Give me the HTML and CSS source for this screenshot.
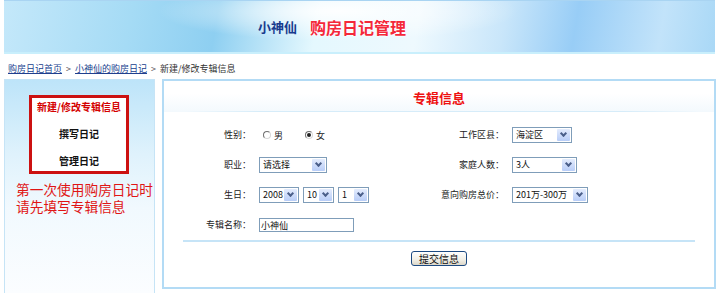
FILE: index.html
```html
<!DOCTYPE html>
<html>
<head>
    <title>购房日记管理 - 新建/修改专辑信息</title>
    <link rel="stylesheet" href="styles.css">
</head>
<body>
    <div class="header">
        <span class="owner">小神仙</span>
        <span class="site-title">购房日记管理</span>
    </div>

    <div class="crumbs">
        <a href="#">购房日记首页</a><span class="sep">&gt;</span><a href="#">小神仙的购房日记</a><span class="sep">&gt;</span><span>新建/修改专辑信息</span>
    </div>

    <div class="content">
        <div class="sidebar">
            <ul class="menu">
                <li class="current">新建/修改专辑信息</li>
                <li>撰写日记</li>
                <li>管理日记</li>
            </ul>
            <p class="tip">第一次使用购房日记时<br>请先填写专辑信息</p>
        </div>

        <div class="panel">
            <div class="panel-title">专辑信息</div>
            <form class="album-form">
                <label class="lbl">性别：</label>
                <div class="field">
                    <span class="radio"></span><span class="radio-text">男</span>
                    <span class="radio checked"></span><span class="radio-text">女</span>
                </div>
                <label class="lbl">工作区县：</label>
                <div class="field">
                    <span class="select w60">海淀区<i class="arrow"></i></span>
                </div>

                <label class="lbl">职业：</label>
                <div class="field">
                    <span class="select w68">请选择<i class="arrow"></i></span>
                </div>
                <label class="lbl">家庭人数：</label>
                <div class="field">
                    <span class="select w65">3人<i class="arrow"></i></span>
                </div>

                <label class="lbl">生日：</label>
                <div class="field">
                    <span class="select w40">2008<i class="arrow"></i></span>
                    <span class="select w31">10<i class="arrow"></i></span>
                    <span class="select w31">1<i class="arrow"></i></span>
                </div>
                <label class="lbl">意向购房总价：</label>
                <div class="field">
                    <span class="select w76">201万-300万<i class="arrow"></i></span>
                </div>

                <label class="lbl">专辑名称：</label>
                <div class="field">
                    <input type="text" class="text-input" value="小神仙">
                </div>
            </form>
            <div class="divider"></div>
            <div class="actions">
                <button type="button" class="submit-btn">提交信息</button>
            </div>
        </div>
    </div>
</body>
</html>
```

FILE: styles.css
```css
body {
    margin: 0;
    padding: 0;
    background: #fff;
    font-family: "Noto Sans CJK SC", "Liberation Sans", sans-serif;
    font-size: 9px;
    color: #222;
    overflow: hidden;
}
.header {
    margin: 0 5px 0 4px;
    height: 54px;
    box-sizing: border-box;
    border-top: 1px solid #a9d4f2;
    border-bottom: 2px solid #c9effc;
    display: flex;
    align-items: center;
    padding-left: 254px;
    background:
        radial-gradient(ellipse 180px 30px at 47% 20%, rgba(255,255,255,0.95), rgba(255,255,255,0)),
        linear-gradient(100deg, #c4e8fa 0%, #a5dbf5 18%, #8ecff1 30%, #e4f8fe 44%, #eef9fe 58%, #c9e6fa 70%, #98cdf6 80%, #c2e3fa 92%, #a9d8f6 100%);
}
.owner {
    font-size: 13px;
    font-weight: bold;
    color: #183b8e;
    margin-right: 13px;
}
.site-title {
    font-size: 16px;
    font-weight: bold;
    color: #f4283a;
    text-shadow: 0 0 2px #fff, 0 0 2px #fff, 0 0 1px #fff;
}
.crumbs {
    padding: 8px 0 0 8px;
    height: 25px;
    box-sizing: border-box;
    line-height: 14px;
    color: #444;
}
.crumbs a {
    color: #203f8e;
    text-decoration: underline;
}
.crumbs span {
    color: #333;
}
.crumbs .sep {
    margin: 0 4px;
    color: #555;
}
.content {
    display: flex;
    padding-left: 4px;
}
.sidebar {
    width: 151px;
    height: 214px;
    box-sizing: border-box;
    border: 1px solid #c6e4f6;
    border-bottom: none;
    margin-right: 7px;
    padding-top: 15px;
    background: linear-gradient(#bde4f9, #dff2fc 35%, #f1f9fe 60%, #fbfdff);
}
.menu {
    list-style: none;
    margin: 0 0 0 24px;
    padding: 0 0 1px;
    width: 100px;
    box-sizing: border-box;
    border: 3px solid #cc1111;
    display: flex;
    flex-direction: column;
    gap: 9px;
    background: #fff;
}
.menu li {
    line-height: 18px;
    text-align: center;
    font-size: 10px;
    font-weight: bold;
    color: #111;
}
.menu li.current {
    color: #d40000;
}
.tip {
    margin: 7px 0 0 11px;
    font-size: 13.7px;
    line-height: 17px;
    white-space: nowrap;
    color: #e01515;
}
.panel {
    width: 554px;
    height: 210px;
    box-sizing: border-box;
    border: 2px solid #b3dbf5;
}
.panel-title {
    position: relative;
    height: 31px;
    line-height: 34px;
    text-align: center;
    font-size: 13px;
    font-weight: bold;
    color: #ee1111;
    background: linear-gradient(#fff 40%, #f3f9fd);
}
.panel-title::after {
    content: "";
    position: absolute;
    left: 20px;
    right: 14px;
    bottom: 0;
    height: 1px;
    background: linear-gradient(90deg, rgba(214,236,249,0), #d6ecf9 15%, #d6ecf9 85%, rgba(214,236,249,0));
}
.album-form {
    display: grid;
    grid-template-columns: 95px 170px 83px 1fr;
    grid-auto-rows: 30px;
    padding-top: 8px;
    margin: 0;
}
.lbl {
    text-align: right;
    padding-right: 8px;
    line-height: 30px;
    color: #222;
}
.field {
    display: flex;
    align-items: center;
    gap: 4px;
}
.radio {
    width: 8px;
    height: 8px;
    box-sizing: border-box;
    border-radius: 50%;
    border: 1px solid;
    border-color: #6f6f6f #d8d8d8 #d8d8d8 #6f6f6f;
    background: #fff;
    margin-left: 4px;
    position: relative;
}
.radio.checked {
    margin-left: 18px;
}
.radio.checked::after {
    content: "";
    position: absolute;
    left: 1px;
    top: 1px;
    width: 4px;
    height: 4px;
    border-radius: 50%;
    background: #222;
}
.radio-text {
    margin-left: -1px;
}
.select {
    display: inline-flex;
    align-items: center;
    justify-content: space-between;
    height: 16px;
    box-sizing: border-box;
    border: 1px solid #7f9db9;
    background: #fff;
    padding-left: 3px;
    color: #111;
    line-height: 14px;
}
.arrow {
    width: 13px;
    height: 12px;
    margin-right: 1px;
    background: linear-gradient(#e4ecfd, #b8cdf8);
    border-radius: 1px;
    position: relative;
}
.arrow::after {
    content: "";
    position: absolute;
    left: 4px;
    top: 2px;
    width: 3px;
    height: 3px;
    border-right: 2px solid #4b5f8a;
    border-bottom: 2px solid #4b5f8a;
    transform: rotate(45deg);
}
.w40 { width: 40px; }
.w31 { width: 31px; }
.w60 { width: 60px; }
.w65 { width: 65px; }
.w68 { width: 68px; }
.w76 { width: 76px; }
.text-input {
    width: 95px;
    height: 14px;
    box-sizing: border-box;
    border: 1px solid #7f9db9;
    padding: 0 1px;
    font-family: inherit;
    font-size: 9px;
    color: #111;
}
.divider {
    height: 2px;
    margin: 0 19px;
    background: #c6e4f7;
}
.actions {
    text-align: center;
    padding-top: 9px;
}
.submit-btn {
    width: 56px;
    height: 15px;
    padding: 0;
    border: 1px solid #1d4a82;
    border-radius: 3px;
    background: linear-gradient(#ffffff, #f1efe6 60%, #dcd7c9);
    font-family: inherit;
    font-size: 10px;
    line-height: 13px;
    color: #111;
    cursor: pointer;
}
```
